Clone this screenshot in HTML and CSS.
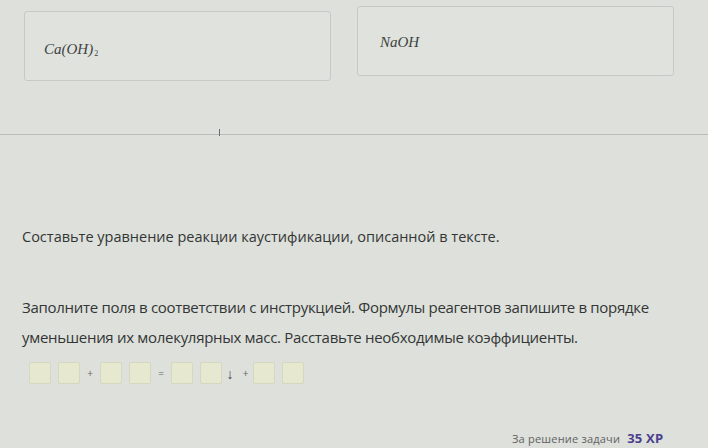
FILE: index.html
```html
<!DOCTYPE html>
<html lang="ru">
<head>
<meta charset="utf-8">
<link rel="stylesheet" href="styles.css">
</head>
<body>
<div class="page">
  <div class="cards">
    <div class="card card-a"><span class="formula">Ca(OH)<sub>2</sub></span></div>
    <div class="card card-b"><span class="formula">NaOH</span></div>
  </div>
  <div class="divider"><span class="tick"></span></div>
  <p class="task">Составьте уравнение реакции каустификации, описанной в тексте.</p>
  <p class="instr">Заполните поля в соответствии с инструкцией. Формулы реагентов запишите в порядке уменьшения их молекулярных масс. Расставьте необходимые коэффициенты.</p>
  <div class="eq">
    <span class="box"></span><span class="box"></span>
    <span class="op">+</span>
    <span class="box"></span><span class="box"></span>
    <span class="op">=</span>
    <span class="box"></span><span class="box"></span>
    <span class="arrow">↓</span><span class="plus2">+</span>
    <span class="box"></span><span class="box"></span>
  </div>
  <div class="reward">За решение задачи <b>35 XP</b></div>
</div>
</body>
</html>
```
FILE: styles.css
```css
html, body { margin: 0; padding: 0; }
body {
  width: 708px; height: 448px; overflow: hidden;
  background: #dde0db;
  font-family: "Open Sans", "Noto Sans", sans-serif;
  color: #333635;
}
.page { position: relative; height: 448px; }
.cards { display: flex; gap: 26px; padding: 9px 0 0 24px; }
.card {
  box-sizing: border-box;
  border: 1px solid #c6c9c5;
  border-radius: 3px;
  background: #dfe2dd;
  height: 70px;
}
.card-a { width: 307px; margin-top: 2px; padding: 25px 0 0 19px; }
.card-b { width: 317px; margin-top: -3px; padding: 23px 0 0 22px; }
.formula {
  font-family: "Liberation Serif", "DejaVu Serif", serif;
  font-style: italic; font-size: 15px; color: #404342;
}
.formula sub { font-size: 8px; font-style: normal; vertical-align: -2px; margin-left: 1px; }
.divider {
  margin: 53px 0 0 0;
  height: 1px; background: #b9bcb8; position: relative;
}
.tick { position: absolute; left: 219px; top: -5px; width: 1px; height: 7px; background: #6a6d6b; }
.task {
  margin: 93px 0 0 22px;
  font-size: 14.5px; line-height: 18px; color: #333635;
}
.instr {
  width: 650px;
  margin: 46px 0 0 22px;
  font-size: 15px; line-height: 30px; color: #333635;
  letter-spacing: -0.3px;
}
.eq { display: flex; align-items: center; margin: 10px 0 0 29px; }
.box {
  width: 22px; height: 22px; box-sizing: border-box; flex: none;
  background: #e6e8cf; border: 1px solid #d5d8bf; border-radius: 2px;
}
.box + .box { margin-left: 7px; }
.op { font-size: 10px; color: #666; width: 20px; text-align: center; }
.arrow { font-size: 14px; color: #444; width: 16px; text-align: center; }
.plus2 { font-size: 10px; color: #666; width: 15px; text-align: center; }
.reward {
  position: absolute; left: 512px; top: 429px;
  font-size: 11px; color: #5f6262; letter-spacing: 0.2px;
}
.reward b { color: #4a3f8e; font-size: 13px; margin-left: 4px; font-weight: 700; }
```
